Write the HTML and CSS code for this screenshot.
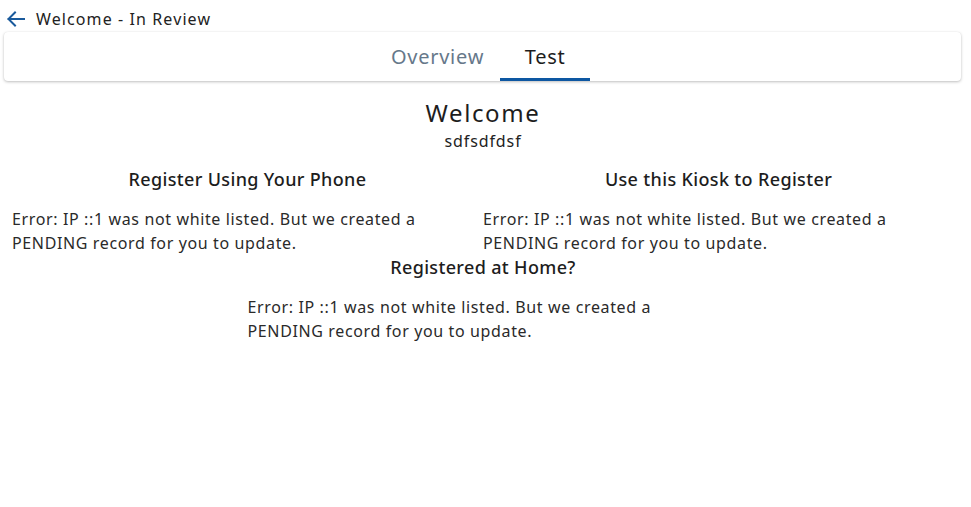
FILE: index.html
```html
<!DOCTYPE html>
<html lang="en">
<head>
<meta charset="utf-8">
<title>Welcome - In Review</title>
<link rel="stylesheet" href="styles.css">
</head>
<body>
<header class="topbar">
  <button class="back" aria-label="Back">
    <svg width="18" height="16" viewBox="0 0 18 16" aria-hidden="true">
      <path d="M8 1.5 L1.5 8 L8 14.5 M1.5 8 H17" fill="none" stroke="#1a5a9c" stroke-width="2" stroke-linecap="square"/>
    </svg>
  </button>
  <span class="title">Welcome - In Review</span>
</header>
<nav class="tabcard">
  <div class="tabs">
    <a class="tab">Overview</a>
    <a class="tab active">Test</a>
  </div>
</nav>
<main class="content">
  <section class="intro">
    <h1 class="heading">Welcome</h1>
    <div class="sub">sdfsdfdsf</div>
  </section>
  <div class="options">
    <section class="option">
      <h2 class="opt-title">Register Using Your Phone</h2>
      <p class="opt-text">Error: IP ::1 was not white listed. But we created a PENDING record for you to update.</p>
    </section>
    <section class="option">
      <h2 class="opt-title">Use this Kiosk to Register</h2>
      <p class="opt-text">Error: IP ::1 was not white listed. But we created a PENDING record for you to update.</p>
    </section>
    <section class="option">
      <h2 class="opt-title">Registered at Home?</h2>
      <p class="opt-text">Error: IP ::1 was not white listed. But we created a PENDING record for you to update.</p>
    </section>
  </div>
</main>
</body>
</html>
```
FILE: styles.css
```css
html, body {
  margin: 0;
  padding: 0;
  background: #ffffff;
}
body {
  font-family: "Noto Sans", "Open Sans", sans-serif;
  color: #212121;
}
.topbar {
  height: 32px;
  display: flex;
  align-items: center;
  padding: 6px 0 0 7px;
  box-sizing: border-box;
}
.back {
  border: 0;
  background: none;
  padding: 0;
  margin: 0 11px 0 0;
  width: 18px;
  height: 16px;
  display: flex;
}
.title {
  font-size: 16px;
  letter-spacing: 1.1px;
  color: #222;
}
.tabcard {
  margin: 0 10px 0 4px;
  height: 49px;
  background: #fff;
  border-radius: 4px;
  box-shadow: 0 1px 3px rgba(0,0,0,0.25), 0 0 1px rgba(0,0,0,0.08);
  display: flex;
  justify-content: center;
}
.tabs {
  display: flex;
}
.tab {
  min-width: 90px;
  padding: 2px 16px 0;
  box-sizing: border-box;
  display: flex;
  align-items: center;
  justify-content: center;
  font-size: 20px;
  letter-spacing: 0.75px;
  color: #66788a;
  border-bottom: 3px solid transparent;
}
.tab.active {
  color: #1d1d1d;
  border-bottom-color: #0d57a2;
}
.content {
  margin: 0 17px 0 12px;
}
.intro {
  text-align: center;
  padding-top: 16px;
}
.heading {
  margin: 0;
  font-size: 24px;
  font-weight: 400;
  line-height: 32px;
  letter-spacing: 1.6px;
  color: #1d1d1d;
}
.sub {
  font-size: 16px;
  line-height: 24px;
  letter-spacing: 0.9px;
  color: #222;
}
.options {
  display: flex;
  flex-wrap: wrap;
  justify-content: center;
  margin-top: 14px;
}
.option {
  width: 50%;
}
.opt-title {
  margin: 0 0 16px;
  font-size: 18px;
  font-weight: 500;
  line-height: 24px;
  letter-spacing: 0.35px;
  text-align: center;
  color: #1d1d1d;
}
.opt-text {
  margin: 0;
  font-size: 16px;
  line-height: 24px;
  letter-spacing: 0.63px;
  color: #2a2a2a;
}
```
